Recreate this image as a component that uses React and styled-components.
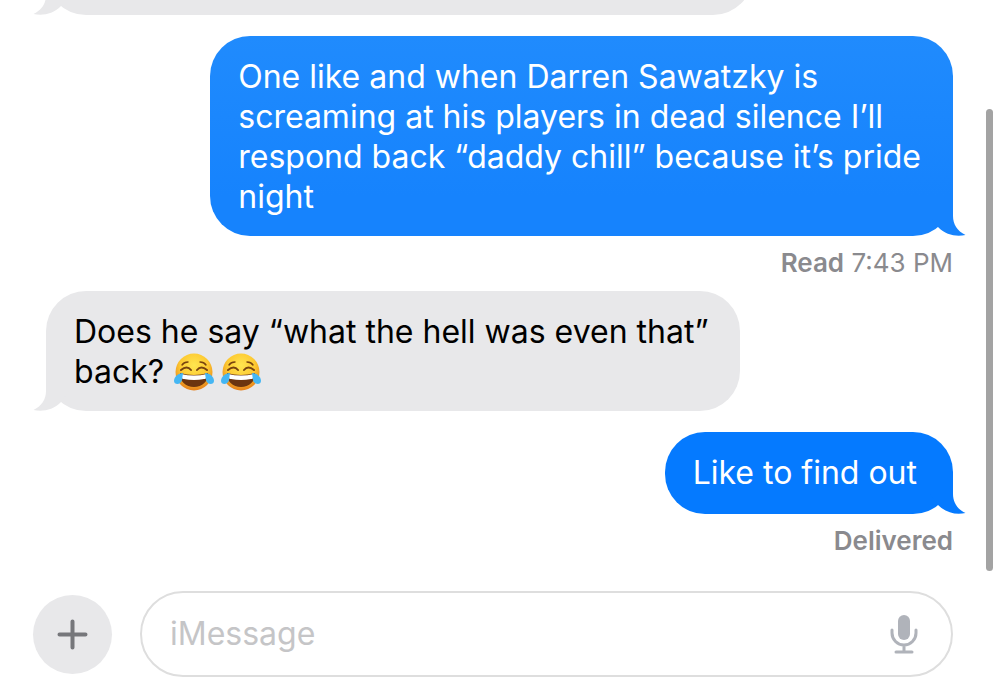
import React, { useId } from 'react';
import styled, { createGlobalStyle } from 'styled-components';

const GlobalStyle = createGlobalStyle`
  * {
    box-sizing: border-box;
  }

  body {
    margin: 0;
    background-color: white;
    font-family: Inter, 'Liberation Sans', sans-serif;
  }
`;

const Screen = styled.main`
  position: relative;
  display: flex;
  flex-direction: column;
  height: 100vh;
  overflow: hidden;
`;

const Thread = styled.section`
  flex: 1;
  min-height: 0;
  display: flex;
  flex-direction: column;
  justify-content: flex-end;
  padding: 0 47px 22px 46px;
`;

const Bubble = styled.div`
  position: relative;
  flex-shrink: 0;
  align-self: ${props => (props.$sent ? 'flex-end' : 'flex-start')};
  min-height: 82px;
  margin-bottom: ${props => props.$gap || 0}px;
  padding: 21px ${props => (props.$long ? 32 : 36)}px 19px 28px;
  border-radius: 40px;
  background: ${props => props.$fill};
  color: ${props => (props.$sent ? 'white' : 'black')};
  font-size: 32px;
  line-height: 40px;
  white-space: pre-line;
`;

const EarlierBubble = styled(Bubble)`
  width: 78%;
`;

const TailShape = styled.svg`
  position: absolute;
  bottom: 0;
  width: 40px;
  height: 40px;
  ${props => (props.$sent ? 'right: -13px;' : 'left: -13px; transform: scaleX(-1);')}
`;

const Status = styled.p`
  flex-shrink: 0;
  margin: 0;
  padding: 11px 0 12px;
  color: #8a8a8e;
  font-size: 26px;
  line-height: 32px;
  text-align: right;
`;

const StatusLabel = styled.span`
  font-weight: 600;
`;

const Emoji = styled.svg`
  width: 42px;
  height: 40px;
  margin-right: 5px;
  vertical-align: top;
`;

const Composer = styled.form`
  display: flex;
  align-items: center;
  gap: 28px;
  padding: 0 47px 21px 33px;
`;

const AddButton = styled.button`
  display: flex;
  align-items: center;
  justify-content: center;
  flex-shrink: 0;
  width: 79px;
  height: 79px;
  padding: 0;
  border: none;
  border-radius: 50%;
  background-color: #e8e8ea;
  cursor: pointer;
`;

const Field = styled.div`
  flex: 1;
  display: flex;
  align-items: center;
  height: 86px;
  padding: 0 33px 0 28px;
  border: 2px solid #dedede;
  border-radius: 43px;
`;

const Input = styled.input`
  flex: 1;
  min-width: 0;
  padding: 0;
  border: none;
  outline: none;
  background-color: transparent;
  color: black;
  font-family: inherit;
  font-size: 32px;
  line-height: 40px;

  &::placeholder {
    color: #c5c5c7;
    opacity: 1;
  }
`;

const MicButton = styled.button`
  display: flex;
  padding: 0;
  border: none;
  background-color: transparent;
  cursor: pointer;
`;

const ScrollThumb = styled.div`
  position: absolute;
  top: 109px;
  right: 7px;
  bottom: 127px;
  width: 7px;
  border-radius: 4px;
  background-color: #a3a3a3;
`;

const Tail = ({ sent, color }) => (
  <TailShape $sent={sent} viewBox="0 0 40 40" aria-hidden="true">
    <path d="M27 0V20C27 28 31 35 39.5 39C30 41 20 39 12 31L4 20V0Z" fill={color} />
  </TailShape>
);

const JoyEmoji = () => {
  const id = useId();
  return (
    <Emoji viewBox="0 0 42 40" role="img" aria-label="face with tears of joy">
      <defs>
        <radialGradient id={id} cx="0.5" cy="0.32" r="0.68">
          <stop offset="0" stopColor="#ffe650" />
          <stop offset="0.55" stopColor="#fdc932" />
          <stop offset="1" stopColor="#e57f1a" />
        </radialGradient>
      </defs>
      <circle cx="21" cy="20" r="18.5" fill={`url(#${id})`} />
      <path d="M7 21Q21 25 35 21C36 29 29 35 21 35S6 29 7 21Z" fill="#6b3410" />
      <path d="M8 22Q21 25 34 22C34 26 33 27 31 27Q21 29 11 27C9 27 8 26 8 22Z" fill="white" />
      <g fill="none" stroke="#77420f" strokeLinecap="round">
        <path d="M9 13Q11 10 15 10M33 13Q31 10 27 10" strokeWidth="1.4" />
        <path d="M8 18Q14 13 18 18M34 18Q28 13 24 18" strokeWidth="2" />
      </g>
      <path d="M10 21C5 21 1 25 1 29C1 33 8 33 9 28Z" fill="#45b6f3" />
      <path d="M32 21C37 21 41 25 41 29C41 33 34 33 33 28Z" fill="#45b6f3" />
    </Emoji>
  );
};

const PlusIcon = () => (
  <svg width="31" height="31" viewBox="0 0 31 31" aria-hidden="true">
    <path d="M15.5 2.5V28.5M2.5 15.5H28.5" stroke="#76777b" strokeWidth="4" strokeLinecap="round" />
  </svg>
);

const MicIcon = () => (
  <svg width="28" height="40" viewBox="0 0 28 40" fill="none" aria-hidden="true">
    <rect x="8" y="1" width="12" height="25" rx="6" fill="#b0b3ba" />
    <path
      d="M2 16V19A12 12 0 0 0 26 19V16M14 31V38M6 38H22"
      stroke="#b0b3ba"
      strokeWidth="3"
      strokeLinecap="round"
    />
  </svg>
);

export default function App() {
  return (
    <Screen>
      <GlobalStyle />
      <Thread>
        <EarlierBubble $fill="#e8e8ea" $gap={21}>
          <Tail color="#e8e8ea" />
        </EarlierBubble>
        <Bubble $sent $long $fill="linear-gradient(#208bfd, #1683fd 80%)">
          {'One like and when Darren Sawatzky is\nscreaming at his players in dead silence I’ll\nrespond back “daddy chill” because it’s pride\nnight'}
          <Tail sent color="#1683fd" />
        </Bubble>
        <Status>
          <StatusLabel>Read</StatusLabel> 7:43 PM
        </Status>
        <Bubble $long $fill="#e8e8ea" $gap={21}>
          {'Does he say “what the hell was even that”\nback? '}
          <JoyEmoji />
          <JoyEmoji />
          <Tail color="#e8e8ea" />
        </Bubble>
        <Bubble $sent $fill="#057aff">
          Like to find out
          <Tail sent color="#057aff" />
        </Bubble>
        <Status>
          <StatusLabel>Delivered</StatusLabel>
        </Status>
      </Thread>
      <Composer onSubmit={e => e.preventDefault()}>
        <AddButton type="button" aria-label="Add attachment">
          <PlusIcon />
        </AddButton>
        <Field>
          <Input type="text" placeholder="iMessage" aria-label="iMessage" />
          <MicButton type="button" aria-label="Dictate">
            <MicIcon />
          </MicButton>
        </Field>
      </Composer>
      <ScrollThumb />
    </Screen>
  );
}
